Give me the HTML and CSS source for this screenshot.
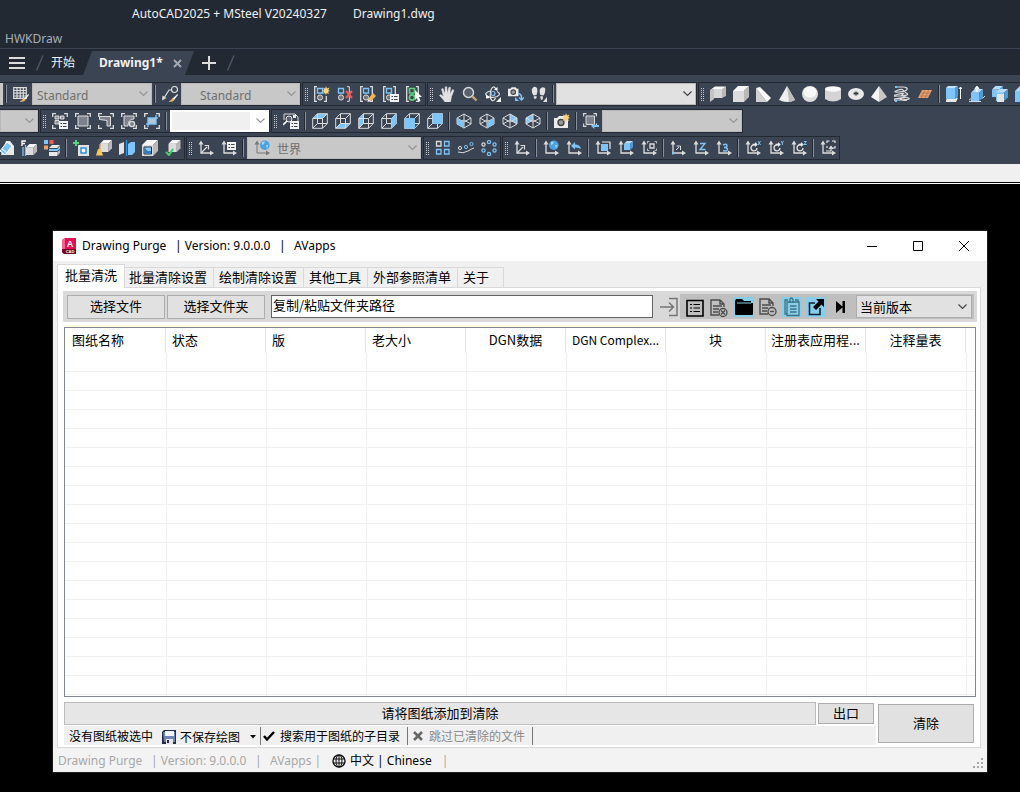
FILE: index.html
```html
<!DOCTYPE html>
<html lang="zh-CN">
<head>
<meta charset="utf-8">
<title>Drawing Purge</title>
<link rel="stylesheet" href="styles.css">
</head>
<body>
<svg class="defs" aria-hidden="true">
  <symbol id="axes" viewBox="0 0 16 16"><path d="M3 3V13H13" fill="none" stroke="#dcdcdc" stroke-width="1.3"/><path d="M.5 4.5L3 .5 5.5 4.5ZM12 10.5L16 13 12 15.5Z" fill="#dcdcdc"/></symbol>
  <symbol id="wire" viewBox="0 0 16 16"><path d="M.7 5.5H10.5V15.3H.7ZM5.5.7H15.3V10.5H5.5ZM.7 5.5L5.5.7M10.5 5.5L15.3.7M10.5 15.3L15.3 10.5M.7 15.3L5.5 10.5" fill="none" stroke="#dcdcdc"/></symbol>
  <symbol id="iso" viewBox="0 0 16 16"><path d="M8 1L15 5V11L8 15 1 11V5ZM1 5L8 9 15 5M8 9V15M8 1V7M8 7L1 11M8 7L15 11" fill="none" stroke="#dcdcdc"/></symbol>
  <symbol id="solid" viewBox="0 0 16 16"><path d="M0 5H11V16H0Z" fill="#dcdcdc"/><path d="M0 5L5 0H16L11 5Z" fill="#f7f7f7"/><path d="M11 5L16 0V11L11 16Z" fill="#b9b9b9"/></symbol>
  <symbol id="bluesolid" viewBox="0 0 16 16"><path d="M0 5H11V16H0Z" fill="#7fc4f8"/><path d="M0 5L5 0H16L11 5Z" fill="#b5dcfb"/><path d="M11 5L16 0V11L11 16Z" fill="#4f9bd8"/></symbol>
  <symbol id="corners" viewBox="0 0 16 16"><path d="M.7 4V.7H4M12 .7H15.3V4M15.3 12V15.3H12M4 15.3H.7V12" fill="none" stroke="#dcdcdc" stroke-width="1.3"/></symbol>
  <symbol id="brackets" viewBox="0 0 16 16"><path d="M3 .7H.7V15.3H3M10 .7H12.3V15.3H10" fill="none" stroke="#dcdcdc" stroke-width="1.3"/></symbol>
  <symbol id="list" viewBox="0 0 16 16"><path d="M7 8H16V16H7Z" fill="#f4f4f4"/><path d="M8.5 10.5H10M11 10.5H14.5M8.5 13.5H10M11 13.5H14.5" stroke="#3b4453"/></symbol>
  <symbol id="pair" viewBox="0 0 16 16"><path d="M3.5 2.5H8.5V7H3.5Z" fill="none" stroke="#7fc4f8" stroke-width="1.4"/><circle cx="6" cy="11.5" r="2.6" fill="#777" stroke="#dcdcdc"/></symbol>
  <symbol id="spark" viewBox="0 0 16 16"><path d="M12 0L13 2.5 15.5 1.5 14.3 4 16 5 14 5.8 15 8 12.8 7 12 9 11 7 9 8 10 5.8 8 5 10 4 9 1.5 11.2 2.5Z" fill="#f7d27c"/></symbol>
  <symbol id="brush" viewBox="0 0 16 16"><path d="M15.5 8L16 9 12 14 10.5 12.5Z" fill="#f1f1f1"/><path d="M10.5 12L12.5 14Q11 16.5 6.5 15.5 9 15 10.5 12Z" fill="#f0b46a"/></symbol>
  <symbol id="camera" viewBox="0 0 16 16"><path d="M0 5H3L5 3H10L12 5H14V15H0Z" fill="#ececec"/><circle cx="7" cy="9.5" r="3" fill="#999" stroke="#444" stroke-width="1.4"/></symbol>
  <symbol id="globe" viewBox="0 0 16 16"><circle cx="10.8" cy="5.2" r="4.8" fill="#4aa3df"/><path d="M8 2L11 1.5 10 4 8 5ZM12 5L14.5 5 13 8.5Z" fill="#a9d6f7"/></symbol>
  <symbol id="rotate" viewBox="0 0 16 16"><path d="M10.5 5.3A3 3 0 1 0 12 8M7.5 4.5H11.5M10 2.7L11.8 4.5 10 6.3" fill="none" stroke="#e8e8e8" stroke-width="1.3"/></symbol>
  <symbol id="folder" viewBox="0 0 20 20"><path d="M1 4L2 2H8L10 4H17V6H19V17Q19 18 18 18H2Q1 18 1 17Z"/><path d="M3 6H17" stroke="#87ceeb"/></symbol>
  <symbol id="doc" viewBox="0 0 20 20"><path d="M10 17H2V2H11L15 6V9M11 2V6H15M4 8H13M4 11H10M4 14H9" fill="none" stroke="#4c4c4c" stroke-width="1.4"/></symbol>
</svg>

<div class="app">
  <header class="titlebar">
    <div class="titlebar-text"><span>AutoCAD2025 + MSteel V20240327</span><span>Drawing1.dwg</span></div>
    <a class="menu-item" href="#">HWKDraw</a>
  </header>

  <nav class="file-tabs">
    <button class="plain burger" aria-label="菜单"><svg width="16" height="12" viewBox="0 0 16 12"><path d="M0 1H16M0 6H16M0 11H16" stroke="#dcdcdc" stroke-width="2"/></svg></button>
    <svg class="slash" viewBox="0 0 8 16"><path d="M.5 15.5L7 .5" stroke="#4b5565" stroke-width="1.5"/></svg>
    <button class="plain start-tab">开始</button>
    <div class="drawing-tab"><button class="plain drawing-name">Drawing1*</button><button class="plain" aria-label="关闭"><svg width="9" height="9" viewBox="0 0 9 9"><path d="M1 1L8 8M8 1L1 8" stroke="#a3a9b2" stroke-width="2"/></svg></button></div>
    <button class="plain add-tab" aria-label="新建"><svg width="14" height="14" viewBox="0 0 14 14"><path d="M7 0V14M0 7H14" stroke="#dcdcdc" stroke-width="2"/></svg></button>
    <svg class="slash" viewBox="0 0 8 16"><path d="M.5 15.5L7 .5" stroke="#4b5565" stroke-width="1.5"/></svg>
  </nav>

  <div class="toolbars">
    <div class="row">
      <div class="bar first">
        <span class="stub"></span><i class="sep"></i>
        <button class="ib" aria-label="表格样式"><svg viewBox="0 0 16 16"><path d="M.7 1.7H13.3V12.3H.7ZM.7 4.5H13.3M.7 7.2H13.3M.7 10H13.3M4 1.7V12M7.2 1.7V12M10.3 1.7V12" fill="none" stroke="#dcdcdc" stroke-width="1.2"/><use href="#brush"/></svg></button>
        <select class="combo w120" aria-label="表格样式"><option>Standard</option></select><i class="sep"></i>
        <button class="ib" aria-label="引线样式"><svg viewBox="0 0 16 16"><circle cx="12.5" cy="3.5" r="3" fill="none" stroke="#dcdcdc" stroke-width="1.2"/><path d="M9.5 4H7L2 12" fill="none" stroke="#dcdcdc" stroke-width="1.2"/><path d="M0 14.5L.5 9.5 4.5 12Z" fill="#dcdcdc"/><use href="#brush"/></svg></button>
        <select class="combo w119 indent" aria-label="引线样式"><option>Standard</option></select>
      </div>
      <div class="bar"><i class="grip"></i>
        <button class="ib" aria-label="新建组"><svg viewBox="0 0 16 16"><path d="M3 .7H.7V15.3H3M10 15.3H12.3V10" fill="none" stroke="#dcdcdc" stroke-width="1.3"/><use href="#pair"/><use href="#spark"/></svg></button>
        <button class="ib" aria-label="解组"><svg viewBox="0 0 16 16"><path d="M10 .7H12.3V15.3H10" fill="none" stroke="#dcdcdc"/><use href="#pair" x="-2"/><path d="M9 5L15 12M15 5L9 12" stroke="#f05a5a" stroke-width="2"/></svg></button>
        <button class="ib" aria-label="编辑组"><svg viewBox="0 0 16 16"><use href="#brackets"/><use href="#pair"/><path d="M8 13L13 7 16 10 11 15Z" fill="#f0b45a"/><path d="M8 13L11 15 7.5 16Z" fill="#fff"/></svg></button>
        <button class="ib" aria-label="组管理器"><svg viewBox="0 0 16 16"><use href="#brackets"/><use href="#pair"/><use href="#list"/></svg></button>
        <button class="ib" aria-label="组选择"><svg viewBox="0 0 16 16"><use href="#brackets"/><path d="M3.5 2.5H8.5V7H3.5Z" fill="none" stroke="#5fd07a" stroke-width="1.6"/><circle cx="6" cy="11.5" r="2.6" fill="none" stroke="#5fd07a" stroke-width="1.6"/><path d="M9 4L16 11H13L14.5 15 12.5 16 11 12 9 14Z" fill="#fff"/></svg></button>
      </div>
      <div class="bar"><i class="grip"></i>
        <button class="ib" aria-label="平移"><svg viewBox="0 0 16 16"><path d="M6 16Q4 13 .5 9.5L1.5 8.5 4.5 10.5 2.5 3 4 2.5 6 8 6.2 .8H7.8L8.2 7.5 10 1.2 11.5 1.6 10.8 8 13.6 3.5 15 4.3 12.5 10.5 11.5 16Z" fill="#e2e2e2" stroke="#e2e2e2" stroke-width=".5"/></svg></button>
        <button class="ib" aria-label="缩放"><svg viewBox="0 0 16 16"><circle cx="6.5" cy="6.5" r="5" fill="#59616e" stroke="#dcdcdc" stroke-width="1.4"/><path d="M10.3 10.3L14.5 14.5" stroke="#c8a679" stroke-width="2.4"/></svg></button>
        <button class="ib" aria-label="动态观察"><svg viewBox="0 0 16 16"><g fill="none" stroke="#e2e2e2" stroke-width="1.2"><path d="M11 3Q8-1.5 6 4 4 12 7 14.5 9 15.5 10.5 12M5 5Q-1.5 7 2 10 6 12.5 12 10.5 17 8 12 5.5"/><circle cx="8" cy="7.5" r="2" stroke="#7fc4f8"/></g><path d="M16 11V16H11ZM1 8L5 12 1 12.5ZM9 3.5L12.5 1 12.5 5Z" fill="#fff"/></svg></button>
        <button class="ib" aria-label="相机"><svg viewBox="0 0 16 16"><use href="#camera" width="12" height="12" y="-1"/><path d="M10 7.5Q14 8 13.5 13M11 11.5L13.5 14 16 11.5" fill="none" stroke="#7fc4f8" stroke-width="1.5"/><path d="M7 11V15H11Z" fill="#7fc4f8"/></svg></button>
        <button class="ib" aria-label="漫游"><svg viewBox="0 0 16 16"><path d="M1 3Q3-1 6 2 7 6 5.5 9L2.5 9.5Q0 6 1 3ZM2.5 10.5L5.5 10Q6 13 4 13 3 13 2.5 10.5ZM9 3Q11 0 14 2 15 6 12.5 9.5L9.5 9Q8 6 9 3ZM9.5 10L12 10.5Q12 14 10.5 14 9 13 9.5 10ZM16 11V16H12Z" fill="#e2e2e2"/></svg></button>
        <i class="sep"></i><select class="combo light w140" aria-label="视图"><option></option></select>
      </div>
      <div class="bar grow"><i class="grip"></i>
        <button class="ib" aria-label="多段体"><svg viewBox="0 0 16 16"><path d="M0 4L4 3V13L0 16Z" fill="#c4c4c4"/><path d="M0 4L5 .5H16L13 3H4Z" fill="#fafafa"/><path d="M4 3H12V12H4Z" fill="#d8d8d8"/><path d="M12 3L16 .5V10L12 12Z" fill="#b9b9b9"/></svg></button>
        <button class="ib" aria-label="长方体"><svg viewBox="0 0 16 16"><use href="#solid"/></svg></button>
        <button class="ib" aria-label="楔体"><svg viewBox="0 0 16 16"><path d="M0 2V16H11Z" fill="#d2d2d2"/><path d="M0 2L4 1 15 12 11 16Z" fill="#fafafa"/></svg></button>
        <button class="ib" aria-label="圆锥体"><svg viewBox="0 0 16 16"><path d="M8 0L16 14Q8 18 0 14Z" fill="#f0f0f0"/><path d="M8 0L16 14Q13 16 10 16Z" fill="#bdbdbd"/></svg></button>
        <button class="ib" aria-label="球体"><svg viewBox="0 0 16 16"><circle cx="8" cy="8" r="8" fill="#dedede"/><ellipse cx="8" cy="6" rx="6.5" ry="5.5" fill="#f8f8f8"/></svg></button>
        <button class="ib" aria-label="圆柱体"><svg viewBox="0 0 16 16"><path d="M0 3V13Q8 18 16 13V3Z" fill="#d4d4d4"/><ellipse cx="8" cy="3" rx="8" ry="2.7" fill="#fafafa"/></svg></button>
        <button class="ib" aria-label="圆环体"><svg viewBox="0 0 16 16"><ellipse cx="8" cy="8" rx="8" ry="6" fill="#e9e9e9"/><ellipse cx="8" cy="7.5" rx="2.5" ry="1.8" fill="#333b48" stroke="#a8a8a8"/></svg></button>
        <button class="ib" aria-label="棱锥体"><svg viewBox="0 0 16 16"><path d="M8 0L0 11 8 16Z" fill="#f5f5f5"/><path d="M8 0L16 11 8 16Z" fill="#c8c8c8"/></svg></button>
        <button class="ib" aria-label="螺旋"><svg viewBox="0 0 16 16"><g fill="none" stroke="#dcdcdc" stroke-width="1.2"><path d="M3 1H9Q14 1.5 13 3.5T5 6 3 4.5 9 4 13 7.5 5 10 3 8.500 9 8 13 11.5 5 14 3 12.5 9 12 13 14.5"/></g><path d="M1 0H3V2H1ZM1 14H3V16H1Z" fill="#7fc4f8"/></svg></button>
        <button class="ib" aria-label="平面曲面"><svg viewBox="0 0 16 16"><path d="M5 4H15L11 12H1Z" fill="#eba273"/><path d="M4 7H13M3 10H12M8 4L4 12M12 4L8 12" stroke="#a96a45" stroke-width=".7"/></svg></button>
        <i class="sep"></i>
        <button class="ib" aria-label="拉伸"><svg viewBox="0 0 16 16"><path d="M0 14L2 12H12L10 16H0Z" fill="#e8e8e8"/><path d="M0 2H9V13H0Z" fill="#7fc4f8"/><path d="M0 2L2 0H12L9 2Z" fill="#c4e4fc"/><path d="M9 2L12 0V11L9 13Z" fill="#4f9bd8"/><path d="M14.5 1V13M13 3L14.5 1 16 3" fill="none" stroke="#fff"/></svg></button>
        <button class="ib" aria-label="按住并拖动"><svg viewBox="0 0 16 16"><path d="M0 14L3 12H14L16 10M0 15.5H12" stroke="#dcdcdc" fill="none"/><use href="#bluesolid" width="12" height="12" x="2" y="3"/><path d="M8 6V1M6 3L8 .5 10 3" fill="none" stroke="#fff" stroke-width="1.3"/></svg></button>
        <button class="ib" aria-label="并集"><svg viewBox="0 0 16 16"><use href="#bluesolid" width="11" height="11"/><use href="#bluesolid" width="12" height="12" x="4" y="3"/><path d="M5 8H12V16H5Z" fill="#e2e2e2"/></svg></button>
        <button class="ib" aria-label="差集"><svg viewBox="0 0 16 16"><use href="#bluesolid"/></svg></button>
      </div>
    </div>

    <div class="row">
      <div class="bar first"><select class="combo w38" aria-label="图层"><option></option></select></div>
      <div class="bar"><i class="grip"></i>
        <button class="ib" aria-label="视口"><svg viewBox="0 0 16 16"><use href="#corners"/><path d="M3 3H7V6H3ZM8.5 3H12V6H8.5ZM3 7.5H7V11H3Z" fill="#8a909b" stroke="#dcdcdc"/><use href="#list"/></svg></button>
        <button class="ib" aria-label="矩形视口"><svg viewBox="0 0 16 16"><use href="#corners"/><path d="M3 3H13V13H3Z" fill="#7c828d" stroke="#dcdcdc"/></svg></button>
        <button class="ib" aria-label="多边形视口"><svg viewBox="0 0 16 16"><use href="#corners"/><path d="M1.5 3.5H12.5V13H9V7.5L1.5 6.5Z" fill="#7c828d" stroke="#dcdcdc"/></svg></button>
        <button class="ib" aria-label="对象视口"><svg viewBox="0 0 16 16"><use href="#corners"/><path d="M3 13V3H13V6Q7 6 7 13Z" fill="#7c828d" stroke="#dcdcdc"/><circle cx="11" cy="11" r="2.6" fill="#7c828d" stroke="#dcdcdc" stroke-width="1.3"/></svg></button>
        <button class="ib" aria-label="剪裁视口"><svg viewBox="0 0 16 16"><use href="#corners"/><path d="M4 5H12V11H4Z" fill="#b5c5d2"/><path d="M4 14V5H14M2 11H12V2" fill="none" stroke="#7fc4f8" stroke-width="1.4"/></svg></button>
        <i class="sep"></i><select class="combo white w99" aria-label="比例"><option></option></select>
      </div>
      <div class="bar"><i class="grip"></i>
        <button class="ib" aria-label="视图管理器"><svg viewBox="0 0 16 16"><path d="M1 7V1H12L15 4V8" fill="none" stroke="#dcdcdc"/><path d="M10 2H13V5H10Z" fill="#e8e8e8"/><circle cx="6" cy="6" r="3" fill="#59616e" stroke="#e8e8e8"/><path d="M0 12L4 8" stroke="#fff" stroke-width="1.6"/><use href="#list"/></svg></button>
        <i class="sep"></i>
        <button class="ib" aria-label="俯视"><svg viewBox="0 0 16 16"><path d="M1 5.5L5.5 1H15L10.5 5.5Z" fill="#7fc4f8"/><use href="#wire"/></svg></button>
        <button class="ib" aria-label="仰视"><svg viewBox="0 0 16 16"><path d="M1 15L5.5 10.5H15L10.5 15Z" fill="#7fc4f8"/><use href="#wire"/></svg></button>
        <button class="ib" aria-label="左视"><svg viewBox="0 0 16 16"><path d="M1 5.5L5.5 1V10.5L1 15Z" fill="#7fc4f8"/><use href="#wire"/></svg></button>
        <button class="ib" aria-label="右视"><svg viewBox="0 0 16 16"><use href="#wire"/><path d="M10.5 5.5L15.5.5V10.5L10.5 15.5Z" fill="#7fc4f8"/></svg></button>
        <button class="ib" aria-label="前视"><svg viewBox="0 0 16 16"><use href="#wire"/><path d="M.5 5H11V15.5H.5Z" fill="#7fc4f8"/></svg></button>
        <button class="ib" aria-label="后视"><svg viewBox="0 0 16 16"><use href="#wire"/><path d="M5.5.5H15.5V11H5.5Z" fill="#7fc4f8"/></svg></button>
        <i class="sep"></i>
        <button class="ib" aria-label="西南等轴测"><svg viewBox="0 0 16 16"><use href="#iso"/><path d="M1 5L8 9V15.5L1 11Z" fill="#7fc4f8"/></svg></button>
        <button class="ib" aria-label="东南等轴测"><svg viewBox="0 0 16 16"><use href="#iso"/><path d="M15 5L8 9V15.5L15 11Z" fill="#7fc4f8"/></svg></button>
        <button class="ib" aria-label="东北等轴测"><svg viewBox="0 0 16 16"><path d="M8 1L15 5V11L8 7Z" fill="#7fc4f8"/><use href="#iso"/></svg></button>
        <button class="ib" aria-label="西北等轴测"><svg viewBox="0 0 16 16"><path d="M8 1L1 5V11L8 7Z" fill="#7fc4f8"/><use href="#iso"/></svg></button>
        <i class="sep"></i>
        <button class="ib" aria-label="创建相机"><svg viewBox="0 0 16 16"><use href="#camera"/><use href="#spark"/></svg></button>
        <i class="sep"></i>
        <button class="ib" aria-label="新建视口"><svg viewBox="0 0 16 16"><use href="#corners" width="14" height="14"/><path d="M3 3H11.5V11.5H3Z" fill="#7c828d" stroke="#dcdcdc"/><path d="M8 13L11.5 10V12H16V14H11.5V16Z" fill="#7fc4f8"/></svg></button>
        <select class="combo w140" aria-label="视觉样式"><option></option></select>
      </div>
    </div>

    <div class="row">
      <div class="bar clipped">
        <button class="ib" aria-label="剖切"><svg viewBox="0 0 16 16"><path d="M8 1H12L16 6V15H3Z" fill="#e8e8e8"/><path d="M2 11L9 2 14 6 7 15Z" fill="#7fc4f8" stroke="#fff"/><path d="M4 9L9 13" stroke="#fff"/></svg></button>
        <button class="ib" aria-label="加厚"><svg viewBox="0 0 16 16"><path d="M1 6V1H5M1 3.5H4" fill="none" stroke="#fff" stroke-width="1.4"/><path d="M2 7V16M4.5 5V16" stroke="#7fc4f8" stroke-width="1.3"/><use href="#solid" width="11" height="13" x="5" y="3"/></svg></button>
        <button class="ib" aria-label="干涉"><svg viewBox="0 0 16 16"><path d="M0 0H4V4H0Z" fill="#7fc4f8"/><path d="M5.5 0H9.5V4H5.5Z" fill="#f05a5a"/><path d="M0 5.5H4V9.5H0Z" fill="#f0a070"/><path d="M5 8L8 5H16L13 8ZM5 12H13V16H5Z" fill="#e8e8e8"/><path d="M5 9H13L16 6V9L13 11H5Z" fill="#7fc4f8"/><path d="M13 12L16 10V13L13 16Z" fill="#b9b9b9"/></svg></button>
        <i class="sep"></i>
        <button class="ib" aria-label="压印"><svg viewBox="0 0 16 16"><path d="M3 0V6M0 3H6" stroke="#5fd07a" stroke-width="2"/><path d="M5 5H16V16H5Z" fill="#e2e2e2"/><path d="M8 8H13V13H8Z" fill="#fff" stroke="#2a92dc" stroke-width="1.5"/></svg></button>
        <button class="ib" aria-label="清除实体"><svg viewBox="0 0 16 16"><use href="#solid" width="12" height="12" x="4"/><path d="M4 4L3.5 9" stroke="#c98f3e" stroke-width="1.5"/><path d="M2 9H5L7 15.5H0Z" fill="#f5c65f"/></svg></button>
        <button class="ib" aria-label="分割"><svg viewBox="0 0 16 16"><path d="M0 4L5 2V13L0 15Z" fill="#e2e2e2"/><path d="M7.5 0V16" stroke="#2a92dc" stroke-width="1.4"/><path d="M9 4L12 2H16V12L13 15H9Z" fill="#7fc4f8"/></svg></button>
        <button class="ib" aria-label="抽壳"><svg viewBox="0 0 16 16"><use href="#solid"/><path d="M2 7H9.5V14H2Z" fill="#8fcaf7" stroke="#27303d"/><path d="M2.5 7.5L5.5 11H9V13.5H2.5Z" fill="#2f7fc0"/></svg></button>
        <button class="ib" aria-label="检查"><svg viewBox="0 0 16 16"><use href="#solid" width="13" height="12" x="3"/><path d="M1 12L4 15 8 9" fill="none" stroke="#4cc86c" stroke-width="2.2"/></svg></button>
      </div>
      <div class="bar"><i class="grip"></i>
        <button class="ib" aria-label="UCS"><svg viewBox="0 0 16 16"><use href="#axes"/><path d="M3 13L9 7M6.5 5.5H10.5V9.5" fill="none" stroke="#dcdcdc" stroke-width="1.2"/></svg></button>
        <button class="ib" aria-label="命名 UCS"><svg viewBox="0 0 16 16"><use href="#axes"/><path d="M6 2H15V10H6Z" fill="#f4f4f4"/><path d="M7.5 4.5H9M10 4.5H13.5M7.5 7.5H9M10 7.5H13.5" stroke="#3b4453"/></svg></button>
        <i class="sep"></i>
        <span class="combo-wrap"><svg class="combo-icon" viewBox="0 0 16 16"><path d="M3 3V13H13" fill="none" stroke="#777"/><path d="M.5 4.5L3 .5 5.5 4.5ZM12 10.5L16 13 12 15.5Z" fill="#777"/><use href="#globe"/></svg><select class="combo w174" aria-label="坐标系"><option>世界</option></select></span>
      </div>
      <div class="bar"><i class="grip"></i>
        <button class="ib" aria-label="矩形阵列"><svg viewBox="0 0 16 16"><g fill="none" stroke="#7fc4f8" stroke-width="1.3"><path d="M1.5 1.5H6V6H1.5Z" stroke="#dcdcdc"/><path d="M9.5 1.5H14V6H9.5ZM1.5 9.5H6V14H1.5ZM9.5 9.5H14V14H9.5Z"/></g></svg></button>
        <button class="ib" aria-label="路径阵列"><svg viewBox="0 0 16 16"><path d="M0 12Q5 14 10 11T16 8" fill="none" stroke="#dcdcdc"/><circle cx="2" cy="8" r="1.6" fill="none" stroke="#dcdcdc"/><g fill="none" stroke="#7fc4f8"><circle cx="8" cy="7" r="1.6"/><circle cx="13.5" cy="4" r="1.6"/></g></svg></button>
        <button class="ib" aria-label="环形阵列"><svg viewBox="0 0 16 16"><g fill="none" stroke="#7fc4f8" stroke-width="1.2"><circle cx="8" cy="2" r="1.6"/><circle cx="13.5" cy="4.5" r="1.6"/><circle cx="13.5" cy="10.5" r="1.6"/><circle cx="8" cy="14" r="1.6"/><circle cx="2.5" cy="10.5" r="1.6"/><circle cx="2.5" cy="4.5" r="1.6" stroke="#dcdcdc"/></g></svg></button>
      </div>
      <div class="bar"><i class="grip"></i>
        <button class="ib" aria-label="UCS"><svg viewBox="0 0 16 16"><use href="#axes"/><path d="M3 13L9 7M6.5 5.5H10.5V9.5" fill="none" stroke="#dcdcdc" stroke-width="1.2"/></svg></button>
        <i class="sep"></i>
        <button class="ib" aria-label="世界"><svg viewBox="0 0 16 16"><use href="#axes"/><use href="#globe"/></svg></button>
        <button class="ib" aria-label="上一个"><svg viewBox="0 0 16 16"><use href="#axes"/><path d="M5 6L9 2V4.5Q14 4.5 15 9 12 7 9 7.5V9.5Z" fill="#7fc4f8"/></svg></button>
        <i class="sep"></i>
        <button class="ib" aria-label="面"><svg viewBox="0 0 16 16"><use href="#axes"/><path d="M6 4H13V11H6Z" fill="#7fc4f8"/><path d="M7 2H15V9" fill="none" stroke="#e8e8e8" stroke-width="1.2"/></svg></button>
        <button class="ib" aria-label="对象"><svg viewBox="0 0 16 16"><use href="#axes"/><use href="#bluesolid" width="9" height="9" x="6" y="1"/></svg></button>
        <button class="ib" aria-label="视图"><svg viewBox="0 0 16 16"><use href="#axes"/><use href="#corners" width="10" height="10" x="6" y="1"/><path d="M9 4H13V8H9Z" fill="none" stroke="#dcdcdc" stroke-width="1.3"/></svg></button>
        <i class="sep"></i>
        <button class="ib" aria-label="原点"><svg viewBox="0 0 16 16"><use href="#axes"/><path d="M6 10L9 7M6.5 6H10.5V10" fill="none" stroke="#dcdcdc"/><path d="M2 12H4V14.5H2Z" fill="#7fc4f8"/></svg></button>
        <button class="ib" aria-label="Z 轴矢量"><svg viewBox="0 0 16 16"><use href="#axes"/><path d="M7 3.5H12L7 9.5H12.5" fill="none" stroke="#7fc4f8" stroke-width="1.4"/></svg></button>
        <button class="ib" aria-label="三点"><svg viewBox="0 0 16 16"><use href="#axes"/><path d="M7 5Q11 3 11 6 11 7.5 8 7.5 11.5 7.5 11.5 9.5 11 12 7 10.5" fill="none" stroke="#7fc4f8" stroke-width="1.4"/></svg></button>
        <i class="sep"></i>
        <button class="ib" aria-label="绕 X 轴"><svg viewBox="0 0 16 16"><use href="#axes"/><use href="#rotate"/><path d="M13 1L15.5 5M15.5 1L13 5" stroke="#7fc4f8"/></svg></button>
        <button class="ib" aria-label="绕 Y 轴"><svg viewBox="0 0 16 16"><use href="#axes"/><use href="#rotate"/><path d="M13 1L14.3 3 15.5 1M14.3 3V5" fill="none" stroke="#7fc4f8"/></svg></button>
        <button class="ib" aria-label="绕 Z 轴"><svg viewBox="0 0 16 16"><use href="#axes"/><use href="#rotate"/><path d="M13 1.5H15.5L13 4.5H15.7" fill="none" stroke="#7fc4f8"/></svg></button>
        <i class="sep"></i>
        <button class="ib" aria-label="应用"><svg viewBox="0 0 16 16"><use href="#axes"/><path d="M7 3V1H9.5M12 1H15V3M15 6V8H12.5M7 8V6M6 11H11V7M9 9L11 6.5 13 9" fill="none" stroke="#e8e8e8" stroke-width="1.2"/></svg></button>
      </div>
    </div>
  </div>
  <div class="band"></div>

  <main class="canvas">
    <section class="dialog" aria-label="Drawing Purge">
      <div class="dialog-title">
        <svg class="logo" viewBox="0 0 15 16"><path d="M0 2L3 0H14V16H2L0 14Z" fill="#e51050"/><path d="M0 2L3 0V11H0Z" fill="#f0668e"/><path d="M0 11H14V16H2L0 14Z" fill="#6d0925"/><text x="8" y="9" class="logo-a">A</text><text x="8" y="15" class="logo-cad">CAD</text></svg>
        <span class="name">Drawing Purge</span><span class="ver">| Version: 9.0.0.0</span><span class="bar-char">|</span><span>AVapps</span>
        <div class="win-buttons">
          <button class="plain" aria-label="最小化"><svg viewBox="0 0 12 12"><path d="M1 6.5H11" stroke="#000"/></svg></button>
          <button class="plain" aria-label="最大化"><svg viewBox="0 0 12 12"><path d="M1.5 1.5H10.5V10.5H1.5Z" fill="none" stroke="#000"/></svg></button>
          <button class="plain" aria-label="关闭"><svg viewBox="0 0 12 12"><path d="M1 1L11 11M11 1L1 11" stroke="#000"/></svg></button>
        </div>
      </div>

      <div class="dialog-body">
        <div class="tabs" role="tablist">
          <button class="tab selected" role="tab" aria-selected="true">批量清洗</button><button class="tab" role="tab">批量清除设置</button><button class="tab" role="tab">绘制清除设置</button><button class="tab" role="tab">其他工具</button><button class="tab" role="tab">外部参照清单</button><button class="tab last" role="tab">关于</button>
        </div>
        <div class="panel">
          <div class="tools">
            <button class="btn pick">选择文件</button>
            <button class="btn pick">选择文件夹</button>
            <input class="path" type="text" aria-label="文件夹路径" value="复制/粘贴文件夹路径">
            <button class="plain go" aria-label="添加"><svg viewBox="0 0 20 20"><path d="M1 10H14M10 5.5L14.5 10 10 14.5M10 1.5H18V18.5H10" fill="none" stroke="#777" stroke-width="1.5"/></svg></button>
            <div class="strip">
              <button class="tool low" aria-label="列表"><svg viewBox="0 0 20 20"><path d="M1 2.5H17V18H1Z" fill="none" stroke="#000" stroke-width="1.6"/><path d="M4 6.5H6M7.5 6.5H14M4 10H6M7.5 10H14M4 13.5H6M7.5 13.5H14" stroke="#000" stroke-width="1.2"/></svg></button>
              <button class="tool low" aria-label="移除"><svg viewBox="0 0 20 20"><use href="#doc" x="-1"/><circle cx="13" cy="14.5" r="4" fill="#bfbfbf" stroke="#4c4c4c" stroke-width="1.3"/><path d="M11 12.5L15 16.5M15 12.5L11 16.5" stroke="#4c4c4c" stroke-width="1.4"/></svg></button>
              <button class="tool on" aria-label="文件夹"><svg viewBox="0 0 20 20"><use href="#folder"/></svg></button>
              <button class="tool" aria-label="减少"><svg viewBox="0 0 20 20"><use href="#doc"/><circle cx="14" cy="14.5" r="4" fill="#bfbfbf" stroke="#4c4c4c" stroke-width="1.3"/><path d="M12 14.5H16" stroke="#4c4c4c" stroke-width="1.4"/></svg></button>
              <button class="tool on" aria-label="剪贴板"><svg viewBox="0 0 20 20"><path d="M6 3H3V17H5M13 3H16V5M5 5H17V18.5H5ZM8 9H14.5M8 12H14.5M8 15H14.5M8 6V3Q8 1 9.5 1T11 3V6" fill="none" stroke="#3f7185" stroke-width="1.3"/></svg></button>
              <button class="tool on" aria-label="导出"><svg viewBox="0 0 20 20"><path d="M9 6H3.5V17.5H14V11" fill="none" stroke="#123" stroke-width="1.6"/><path d="M10 2H18V10L15.5 7.5 10 13 7 10 12.5 4.5Z"/></svg></button>
              <button class="tool" aria-label="下一个"><svg viewBox="0 0 20 20"><path d="M6 4L13 10 6 16ZM12.5 4H15V16H12.5Z"/></svg></button>
              <select class="version" aria-label="版本"><option>当前版本</option></select>
            </div>
          </div>

          <div class="grid">
            <table class="list">
              <thead><tr><th class="l first-col">图纸名称</th><th class="l">状态</th><th class="l">版</th><th class="l">老大小</th><th>DGN数据</th><th class="latin">DGN Complex...</th><th>块</th><th>注册表应用程...</th><th>注释量表</th><th class="rest"></th></tr></thead>
            </table>
            <div class="lines"></div>
          </div>

          <div class="bottom">
            <div class="bottom-left">
              <div class="progress-row"><button class="btn progress">请将图纸添加到清除</button><button class="btn exit">出口</button></div>
              <div class="options">
                <span class="count">没有图纸被选中</span>
                <button class="plain save"><svg width="16" height="16" viewBox="0 0 16 16"><path d="M1 3L3 1H15V15H1Z" fill="#222d4d"/><path d="M2 3H14V13H3Z" fill="#6e83b6"/><path d="M4 2H13V7H4Z" fill="#f2f2f2"/><path d="M5 10H12V15H5Z" fill="#e6e6e6"/><path d="M6 11H8V14H6Z" fill="#222d4d"/></svg>不保存绘图<svg class="drop" viewBox="0 0 6 4"><path d="M0 0H6L3 3.5Z"/></svg></button>
                <button class="plain opt"><svg width="12" height="12" viewBox="0 0 12 12"><path d="M1 6L4 9.5 11 2" fill="none" stroke="#000" stroke-width="2.5"/></svg>搜索用于图纸的子目录</button>
                <button class="plain opt off"><svg width="10" height="10" viewBox="0 0 10 10"><path d="M1 1L9 9M9 1L1 9" stroke="#666" stroke-width="2.5"/></svg>跳过已清除的文件</button>
              </div>
            </div>
            <button class="btn purge">清除</button>
          </div>
        </div>
      </div>

      <footer class="status">
        <span class="name">Drawing Purge</span><span class="ver">| Version: 9.0.0.0</span><span class="bar-char">|</span><span class="brand">AVapps |</span>
        <button class="plain lang"><svg width="14" height="14" viewBox="0 0 14 14"><g fill="none" stroke="#111"><circle cx="7" cy="7" r="6" stroke-width="1.4"/><ellipse cx="7" cy="7" rx="3" ry="6"/><path d="M7 1V13M1.500 5H12.500M1.500 9H12.500"/></g></svg>中文 | Chinese</button><span class="tail">|</span>
        <svg class="size-grip" viewBox="0 0 11 11"><path d="M8 0H10V2H8ZM4 4H6V6H4ZM8 4H10V6H8ZM0 8H2V10H0ZM4 8H6V10H4ZM8 8H10V10H8Z" fill="#a6a6a6"/></svg>
      </footer>
    </section>
  </main>
</div>
</body>
</html>
```
FILE: styles.css
```css
* { box-sizing: border-box; }
html, body { height: 100%; margin: 0; }
body {
  overflow: hidden;
  background: #000;
  font: 12px/16px "Noto Sans", "Noto Sans CJK SC", sans-serif;
  color: #000;
}
button, input, select { font: inherit; color: inherit; margin: 0; border-radius: 0; }
button { padding: 0; white-space: nowrap; }
svg { display: block; flex: none; }
.defs { position: absolute; width: 0; height: 0; }
.plain { border: 0; background: none; display: flex; align-items: center; }

.app { display: flex; flex-direction: column; height: 100%; }

/* application title and file tabs */
.titlebar { background: #222933; color: #f0f0f0; border-bottom: 1px solid #3b4453; height: 49px; padding-top: 6px; }
.titlebar-text { display: flex; gap: 26px; padding-left: 132px; white-space: pre; }
.menu-item { display: inline-block; margin: 9px 0 0 5px; color: #a9aeb6; text-decoration: none; }
.file-tabs { display: flex; align-items: center; height: 26px; padding: 2px 0 0 9px; background: #222933; color: #f0f0f0; }
.burger { width: 27px; }
.slash { width: 8px; height: 16px; }
.start-tab { width: 39px; padding-left: 7px; }
.drawing-tab { display: flex; align-items: center; gap: 10px; height: 24px; width: 111px; padding-left: 16px; background: #3b4453; clip-path: polygon(9px 0, 100% 0, calc(100% - 9px) 100%, 0 100%); }
.drawing-name { font-weight: 700; }
.add-tab { width: 25px; margin-left: 8px; }

/* tool rows */
.toolbars { display: flex; flex-direction: column; gap: 3px; padding: 7px 0 4px; background: #3b4453; overflow: hidden; }
.row { display: flex; gap: 1px; height: 24px; }
.bar { display: flex; align-items: center; flex: none; border: 1px solid #222933; }
.bar.first { border-left: 0; }
.bar.clipped { margin-left: -7px; }
.bar.grow { border-right: 0; }
.ib { display: flex; align-items: center; justify-content: center; width: 23px; height: 22px; border: 0; background: none; }
.ib svg { width: 16px; height: 16px; }
.stub { width: 3px; height: 22px; background: #c8c8c8; }
.sep { flex: none; width: 6px; height: 18px; background: linear-gradient(90deg, transparent 2px, #222933 2px, #222933 3px, #8a909b 3px, #8a909b 4px, transparent 4px); }
.grip { flex: none; width: 7px; height: 14px; background: repeating-linear-gradient(#3b4453 0 1px, transparent 1px 2px), repeating-linear-gradient(90deg, transparent 0 2px, #c5c8cd 2px 3px, transparent 3px 4px, #c5c8cd 4px 5px, transparent 5px 7px); }
.combo {
  appearance: none; height: 22px; border: 1px solid #b9b9b9; padding: 3px 16px 0 4px; color: #6f6f6f;
  background: #c8c8c8 url("data:image/svg+xml,%3Csvg xmlns='http://www.w3.org/2000/svg' width='9' height='6'%3E%3Cpath d='M.5 .5L4.5 4.5 8.5 .5' fill='none' stroke='%23959595' stroke-width='1.2'/%3E%3C/svg%3E") no-repeat right 3px center;
}
.combo.light, .version { background-image: url("data:image/svg+xml,%3Csvg xmlns='http://www.w3.org/2000/svg' width='9' height='6'%3E%3Cpath d='M.5 .5L4.5 4.5 8.5 .5' fill='none' stroke='%23444' stroke-width='1.2'/%3E%3C/svg%3E"); }
.combo.light { background-color: #e1e1e1; }
.combo.white { background-color: #fff; border: 2px solid #fff; padding: 0; box-shadow: inset 78px 0 0 #f0f0f0; margin-left: 1px; background-position: right 2px center; }
.combo.indent { padding-left: 18px; }
.w38 { width: 38px; }
.w99 { width: 99px; }
.w119 { width: 119px; }
.w120 { width: 120px; }
.w140 { width: 140px; }
.w174 { width: 174px; padding-left: 29px; }
.combo-wrap { position: relative; display: flex; margin-left: 1px; }
.combo-icon { position: absolute; left: 7px; top: 3px; width: 16px; height: 16px; z-index: 1; }
.band { height: 20px; background: #f0f0f0; border-bottom: 1px solid #fff; box-shadow: inset 0 -1px #000; }

/* purge dialog, floating over the drawing area */
.canvas { position: relative; flex: 1; background: #000; }
.dialog { position: absolute; left: 53px; right: 33px; top: 47px; bottom: 20px; display: flex; flex-direction: column; background: #f0f0f0; outline: 1px solid #1c1c1c; }
.dialog-title { display: flex; align-items: center; height: 30px; padding-left: 9px; background: #fff; white-space: nowrap; }
.logo { width: 15px; height: 16px; margin-right: 5px; }
.logo-a { font: 700 9px "Liberation Sans", sans-serif; fill: #fff; text-anchor: middle; }
.logo-cad { font: 700 4px "Liberation Sans", sans-serif; fill: #fff; text-anchor: middle; }
.name { width: 93px; }
.ver { width: 104px; }
.bar-char { width: 15px; }
.win-buttons { display: flex; margin-left: auto; }
.win-buttons button { width: 46px; height: 30px; justify-content: center; }
.win-buttons svg { width: 12px; height: 12px; }

.dialog-body { flex: 1; display: flex; flex-direction: column; padding: 4px 6px 1px 4px; min-height: 0; font: 13px/16px "Noto Sans CJK SC", "Noto Sans", sans-serif; }
.tabs { display: flex; align-items: flex-end; height: 22px; }
.tab { height: 20px; padding: 0 6px 2px 4px; border: 1px solid #d9d9d9; border-left: 0; border-bottom: 0; background: #f0f0f0; }
.tab + .tab + .tab { padding-left: 5px; }
.tab.selected { height: 24px; margin-bottom: -1px; padding: 0 7px 4px; border-left: 1px solid #d9d9d9; background: #fff; position: relative; z-index: 1; }
.tab.last { width: 46px; text-align: left; }
.panel { flex: 1; display: flex; flex-direction: column; min-height: 0; border: 1px solid #d9d9d9; background: #fff; padding: 3px 3px 2px 5px; }
.tools { display: flex; align-items: center; height: 31px; padding: 0 3px 0 4px; background: #d9d9d9; }
.btn { border: 1px solid #adadad; background: #e1e1e1; padding-bottom: 1px; }
.pick { width: 98px; height: 24px; margin-right: 2px; }
.path { flex: 1; min-width: 0; height: 23px; margin-left: 4px; border: 1px solid #646464; background: #fff; padding: 0 1px 4px; }
.go { width: 27px; justify-content: center; padding-left: 5px; }
.go svg { width: 20px; height: 20px; }
.strip { display: flex; align-items: center; height: 25px; padding: 0 2px 0 4px; background: #bfbfbf; }
.tool { width: 20px; height: 20px; margin: 0 2px; border: 0; background: none; }
.tool.low { margin-top: 3px; }
.tool.on { background: #87ceeb; }
.tool svg { width: 20px; height: 20px; }
.version { appearance: none; width: 116px; height: 23px; margin-left: 4px; border: 1px solid #adadad; padding: 0 20px 0 3px; background-color: #e1e1e1; background-repeat: no-repeat; background-position: right 4px center; }

.grid { flex: 1; display: flex; flex-direction: column; min-height: 0; margin: 5px 1px 0; border: 1px solid #828790; box-shadow: 0 -3px 0 -1px #fffde0; background: #fff; }
.list { table-layout: fixed; width: 100%; border-collapse: separate; border-spacing: 0; }
.list th { width: 100px; height: 25px; padding: 0 0 2px; border-right: 1px solid #e5e5e5; font-weight: 400; text-align: center; white-space: nowrap; }
.list .l { text-align: left; padding-left: 6px; }
.list .first-col { width: 101px; padding-left: 7px; }
.list .latin { font-size: 12px; }
.list .rest { width: auto; border: 0; }
.lines { flex: 1; background: repeating-linear-gradient(transparent 0 18px, #f0f0f0 18px 19px), repeating-linear-gradient(90deg, transparent 0 99px, #f0f0f0 99px 100px) 2px 0; }

.bottom { display: flex; gap: 2px; padding: 5px 3px 0 1px; }
.bottom-left { flex: 1; display: flex; flex-direction: column; }
.progress-row { display: flex; align-items: center; gap: 2px; padding-right: 2px; }
.progress { flex: 1; height: 23px; background: #e6e6e6; border-color: #bcbcbc; }
.exit { width: 56px; height: 21px; }
.purge { width: 96px; height: 39px; align-self: center; }
.options { display: flex; align-items: center; height: 19px; margin-top: 1px; background: #f0f0f0; font-size: 12px; white-space: nowrap; }
.count { width: 97px; padding-left: 5px; }
.save { width: 99px; gap: 3px; padding-top: 3px; }
.drop { width: 6px; height: 4px; margin-left: auto; margin-right: 4px; }
.opt { gap: 5px; height: 18px; padding: 0 7px 0 2px; border-right: 1px solid #777; }
.save + .opt { border-left: 1px solid #777; }
.opt.off { gap: 6px; padding-left: 5px; color: #8a8a8a; }

.status { display: flex; align-items: center; height: 23px; padding-left: 5px; background: #f3f3f3; color: #a8a8a8; white-space: nowrap; }
.brand { width: 62px; }
.lang { color: #000; gap: 4px; }
.tail { margin-left: 10px; }
.size-grip { width: 11px; height: 11px; margin: 6px 3px 0 auto; }
```
